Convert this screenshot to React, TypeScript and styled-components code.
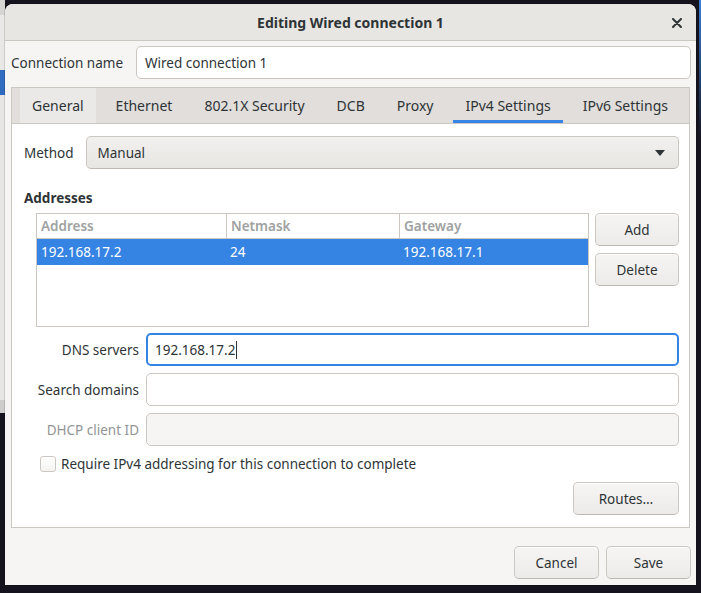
import React from 'react';
import styled, { createGlobalStyle } from 'styled-components';

const GlobalStyle = createGlobalStyle`
  html, body {
    margin: 0;
    padding: 0;
    background: #15141e;
  }
  body {
    font-family: "Noto Sans", "DejaVu Sans", sans-serif;
    font-size: 13.5px;
    color: #2e3436;
  }
  * { box-sizing: border-box; }
`;

const Desktop = styled.div`
  position: relative;
  width: 701px;
  height: 593px;
  overflow: hidden;
  background: #15141e;
  padding: 4px 0 0 5px;
`;

const BehindWindow = styled.div`
  position: absolute;
  left: 0;
  top: 0;
  width: 5px;
  height: 413px;
  background: linear-gradient(#d6d5d3 0 15px, #e9e8e6 15px 70px, #2f6bbf 70px 95px, #e6e5e3 95px 400px, #cfcdcb 400px);
`;

const BehindEdge = styled.div`
  position: absolute;
  right: 0;
  top: 0;
  width: 2px;
  height: 140px;
  background: linear-gradient(#3b7fd6, #15141e);
`;

const Dialog = styled.div`
  position: relative;
  width: 691px;
  height: 581px;
  background: #f6f5f4;
  border-radius: 8px 8px 0 0;
  display: flex;
  flex-direction: column;
  box-shadow: 0 0 0 1px rgba(0, 0, 0, 0.12);
`;

const TitleBar = styled.header`
  height: 37px;
  flex: none;
  display: flex;
  align-items: center;
  justify-content: center;
  position: relative;
  background: #e8e6e3;
  border-bottom: 1px solid #cdc7c2;
  border-radius: 8px 8px 0 0;
`;

const Title = styled.h1`
  margin: 0;
  font-size: 14px;
  font-weight: 700;
  color: #2e3436;
`;

const CloseButton = styled.button`
  position: absolute;
  right: 8px;
  top: 8px;
  width: 22px;
  height: 22px;
  border: none;
  background: none;
  padding: 0;
  display: flex;
  align-items: center;
  justify-content: center;
  color: #2e3436;
`;

const Body = styled.div`
  flex: 1;
  display: flex;
  flex-direction: column;
  padding: 5px 5px 6px 6px;
`;

const NameRow = styled.div`
  display: flex;
  align-items: center;
  gap: 13px;
`;

const Label = styled.span<{ $disabled?: boolean }>`
  white-space: nowrap;
  color: ${(p) => (p.$disabled ? '#929595' : '#2e3436')};
`;

const Entry = styled.div<{ $focused?: boolean; $disabled?: boolean }>`
  flex: 1;
  height: 33px;
  display: flex;
  align-items: center;
  padding: 0 ${(p) => (p.$focused ? '7px' : '8px')};
  background: ${(p) => (p.$disabled ? '#f6f5f4' : '#ffffff')};
  border: ${(p) => (p.$focused ? '2px solid #3584e4' : '1px solid #cdc7c2')};
  border-radius: 5px;
  color: #2e3436;
`;

const Caret = styled.span`
  display: inline-block;
  width: 1px;
  height: 18px;
  background: #2e3436;
  margin-left: 1px;
`;

const Notebook = styled.div`
  margin-top: 8px;
  margin-right: 1px;
  flex: 1;
  display: flex;
  flex-direction: column;
  border: 1px solid #cdc7c2;
`;

const TabBar = styled.div`
  height: 36px;
  display: flex;
  padding: 0 4px;
  background: #e1dedb;
  border-bottom: 1px solid #cdc7c2;
`;

const Tab = styled.div<{ $active?: boolean; $hover?: boolean }>`
  margin: 0 4px;
  padding: 0 12px;
  display: flex;
  align-items: center;
  font-size: 14px;
  color: #2e3436;
  background: ${(p) => (p.$hover ? '#ebe9e7' : 'transparent')};
  box-shadow: ${(p) => (p.$active ? 'inset 0 -3px #3584e4' : 'none')};
`;

const Page = styled.div`
  flex: 1;
  background: #ffffff;
  padding: 12px 10px 12px 12px;
  display: flex;
  flex-direction: column;
`;

const MethodRow = styled.div`
  display: flex;
  align-items: center;
  gap: 12px;
`;

const Combo = styled.div`
  flex: 1;
  height: 33px;
  display: flex;
  align-items: center;
  justify-content: space-between;
  padding: 0 13px 0 11px;
  border: 1px solid #cdc7c2;
  border-bottom-color: #bfb8b1;
  border-radius: 5px;
  background: linear-gradient(#f1f0ee, #e8e6e3);
`;

const SectionTitle = styled.h2`
  margin: 19px 0 0;
  font-size: 13.5px;
  font-weight: 700;
  line-height: 20px;
`;

const AddressesArea = styled.div`
  margin: 5px 0 0 12px;
  display: flex;
  gap: 6px;
`;

const Table = styled.div`
  flex: 1;
  height: 114px;
  border: 1px solid #cdc7c2;
  background: #fff;
`;

const TableRow = styled.div<{ $header?: boolean; $selected?: boolean }>`
  display: grid;
  grid-template-columns: 189px 173px 1fr;
  height: ${(p) => (p.$header ? '25px' : '26px')};
  background: ${(p) => (p.$selected ? '#3584e4' : 'transparent')};
  color: ${(p) => (p.$header ? '#a0a2a2' : p.$selected ? '#ffffff' : '#2e3436')};
  font-weight: ${(p) => (p.$header ? 600 : 400)};
  border-bottom: ${(p) => (p.$header ? '1px solid #cdc7c2' : 'none')};
`;

const Cell = styled.div<{ $divider?: boolean }>`
  display: flex;
  align-items: center;
  padding-left: 4px;
  border-left: ${(p) => (p.$divider ? '1px solid #cdc7c2' : 'none')};
`;

const SideButtons = styled.div`
  display: flex;
  flex-direction: column;
  gap: 7px;
`;

const Button = styled.button<{ $width: number }>`
  width: ${(p) => p.$width}px;
  height: 33px;
  font: inherit;
  color: #2e3436;
  border: 1px solid #cdc7c2;
  border-bottom-color: #bfb8b1;
  border-radius: 5px;
  background: linear-gradient(#f6f5f4, #edebe9);
  box-shadow: inset 0 1px rgba(255, 255, 255, 0.8);
  padding: 0;
`;

const FieldsGrid = styled.div`
  margin: 6px 0 0 12px;
  display: grid;
  grid-template-columns: 103px 1fr;
  column-gap: 7px;
  row-gap: 7px;
  align-items: center;
`;

const FieldLabel = styled(Label)`
  text-align: right;
`;

const CheckRow = styled.label`
  margin: 9px 0 0 16px;
  display: flex;
  align-items: center;
  gap: 5px;
`;

const CheckBox = styled.span`
  width: 16px;
  height: 16px;
  border: 1px solid #cdc7c2;
  border-radius: 3px;
  background: linear-gradient(#ffffff, #f4f3f2);
`;

const RoutesRow = styled.div`
  margin-top: 9px;
  display: flex;
  justify-content: flex-end;
`;

const Footer = styled.div`
  margin-top: 18px;
  display: flex;
  justify-content: flex-end;
  gap: 7px;
`;

const tabs = ['General', 'Ethernet', '802.1X Security', 'DCB', 'Proxy', 'IPv4 Settings', 'IPv6 Settings'];

export default function App() {
  return (
    <>
      <GlobalStyle />
      <Desktop>
        <BehindWindow />
        <BehindEdge />
        <Dialog>
          <TitleBar>
            <Title>Editing Wired connection 1</Title>
            <CloseButton aria-label="Close">
              <svg width="10" height="10" viewBox="0 0 10 10">
                <path d="M1 1 L9 9 M9 1 L1 9" stroke="#2e3436" strokeWidth="2" strokeLinecap="round" />
              </svg>
            </CloseButton>
          </TitleBar>
          <Body>
            <NameRow>
              <Label>Connection name</Label>
              <Entry>Wired connection 1</Entry>
            </NameRow>
            <Notebook>
              <TabBar>
                {tabs.map((t) => (
                  <Tab key={t} $hover={t === 'General'} $active={t === 'IPv4 Settings'}>
                    {t}
                  </Tab>
                ))}
              </TabBar>
              <Page>
                <MethodRow>
                  <Label>Method</Label>
                  <Combo>
                    <span>Manual</span>
                    <svg width="10" height="6" viewBox="0 0 10 6">
                      <path d="M0 0 H10 L5 6 Z" fill="#2e3436" />
                    </svg>
                  </Combo>
                </MethodRow>
                <SectionTitle>Addresses</SectionTitle>
                <AddressesArea>
                  <Table>
                    <TableRow $header>
                      <Cell>Address</Cell>
                      <Cell $divider>Netmask</Cell>
                      <Cell $divider>Gateway</Cell>
                    </TableRow>
                    <TableRow $selected>
                      <Cell>192.168.17.2</Cell>
                      <Cell>24</Cell>
                      <Cell>192.168.17.1</Cell>
                    </TableRow>
                  </Table>
                  <SideButtons>
                    <Button $width={84}>Add</Button>
                    <Button $width={84}>Delete</Button>
                  </SideButtons>
                </AddressesArea>
                <FieldsGrid>
                  <FieldLabel>DNS servers</FieldLabel>
                  <Entry $focused>
                    192.168.17.2
                    <Caret />
                  </Entry>
                  <FieldLabel>Search domains</FieldLabel>
                  <Entry />
                  <FieldLabel $disabled>DHCP client ID</FieldLabel>
                  <Entry $disabled />
                </FieldsGrid>
                <CheckRow>
                  <CheckBox />
                  <span>Require IPv4 addressing for this connection to complete</span>
                </CheckRow>
                <RoutesRow>
                  <Button $width={106}>Routes…</Button>
                </RoutesRow>
              </Page>
            </Notebook>
            <Footer>
              <Button $width={85}>Cancel</Button>
              <Button $width={85}>Save</Button>
            </Footer>
          </Body>
        </Dialog>
      </Desktop>
    </>
  );
}
